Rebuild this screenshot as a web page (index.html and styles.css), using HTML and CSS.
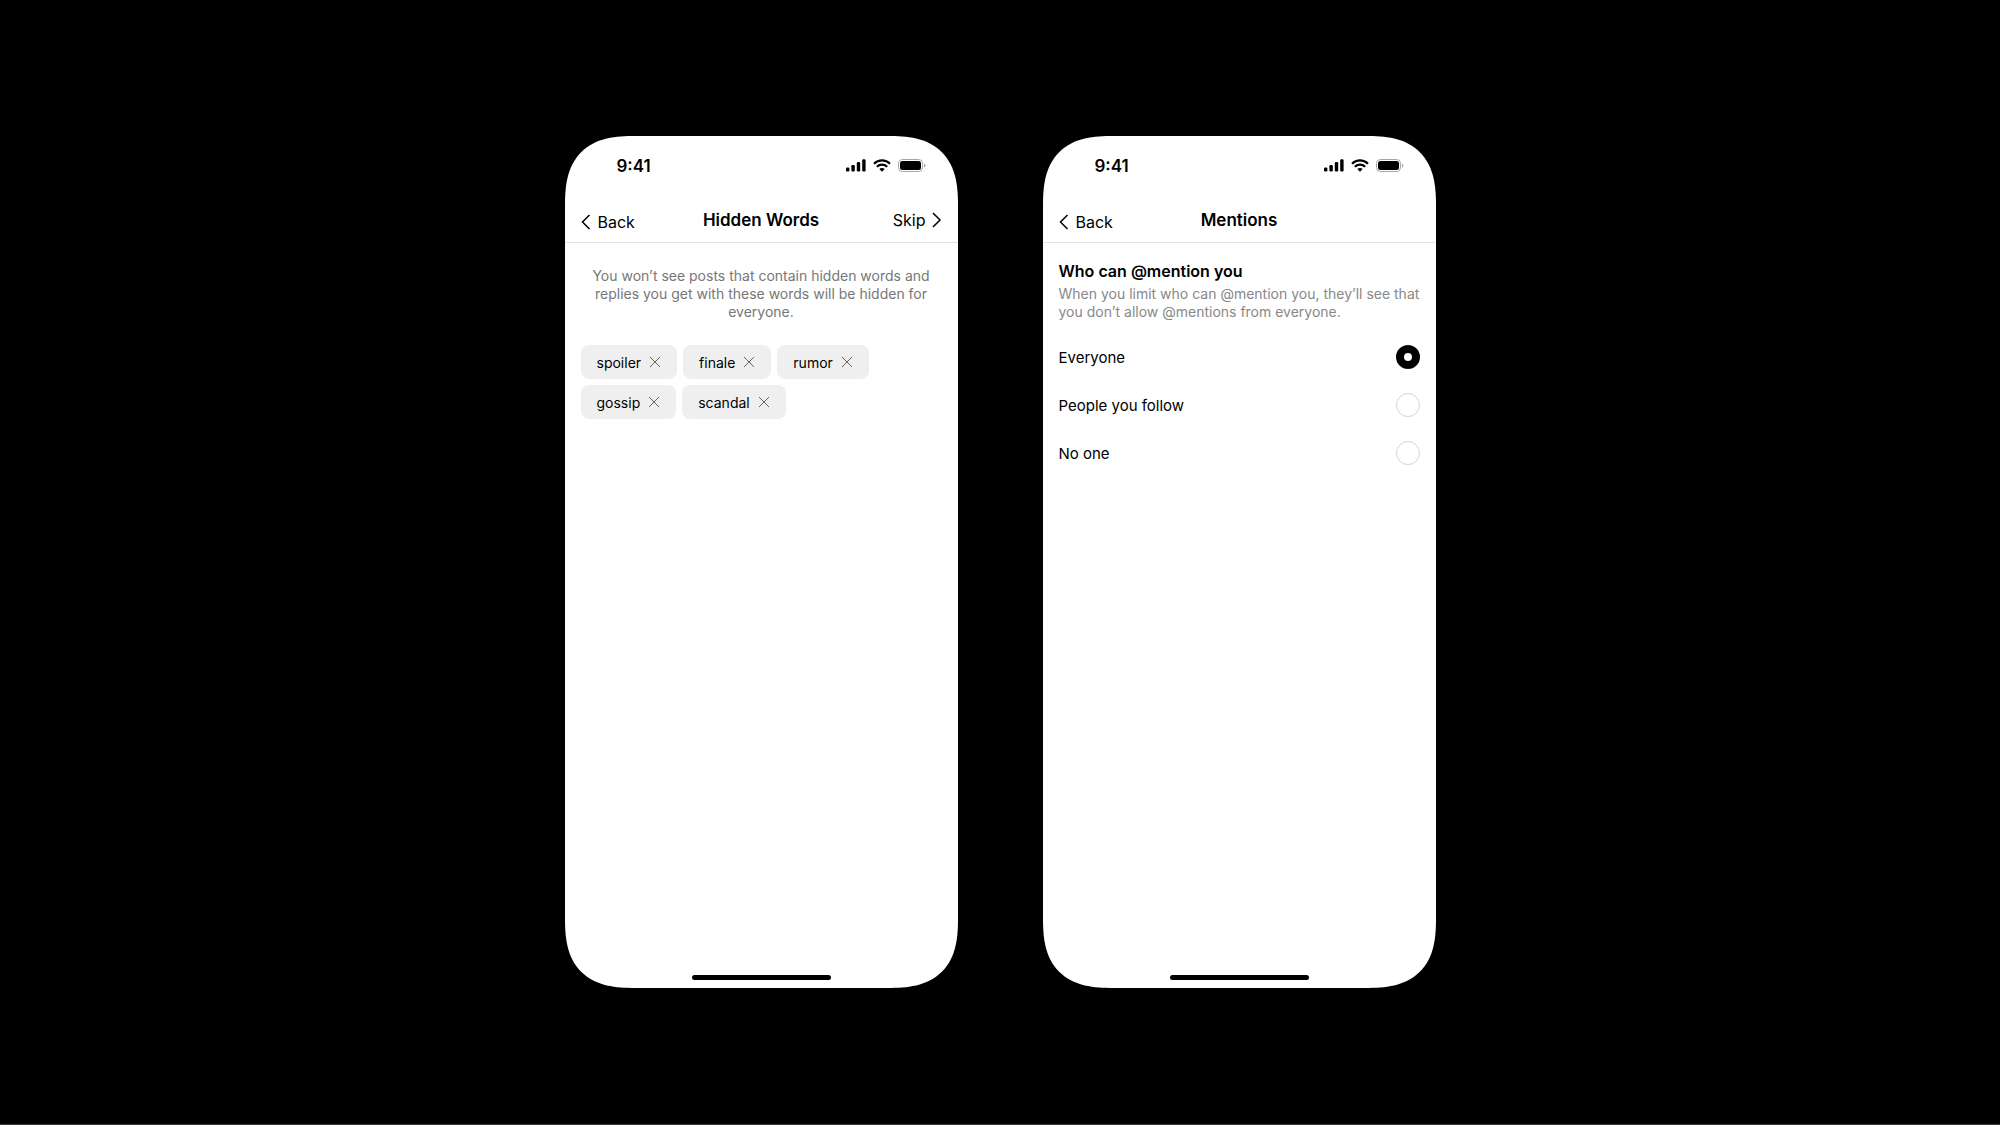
FILE: index.html
```html
<!DOCTYPE html>
<html lang="en">
<head>
    <meta charset="UTF-8" />
    <meta name="viewport" content="width=device-width, initial-scale=1.0" />
    <title>Privacy settings</title>
    <link rel="stylesheet" href="styles.css">
</head>
<body>

    <!-- Shared icons -->
    <svg class="sprite" aria-hidden="true">
        <symbol id="icon-signal" viewBox="0 0 20 13">
            <rect x="0" y="8.6" width="3.4" height="3.8" rx="1.2" />
            <rect x="5.4" y="6" width="3.4" height="6.4" rx="1.2" />
            <rect x="10.8" y="3" width="3.4" height="9.4" rx="1.2" />
            <rect x="16.2" y="0.2" width="3.4" height="12.2" rx="1.2" />
        </symbol>
        <symbol id="icon-wifi" viewBox="0 0 18 13">
            <path d="M1 4.7C5.5 0.3 12.5 0.3 17 4.7M3.8 7.8C6.8 4.9 11.2 4.9 14.2 7.8" fill="none" stroke="currentColor" stroke-width="2.2" />
            <path d="M9 12.7L6.3 10C7.8 8.7 10.2 8.7 11.7 10Z" />
        </symbol>
        <symbol id="icon-battery" viewBox="0 0 28 13">
            <rect x="0.5" y="0.5" width="24" height="12" rx="3.8" fill="none" stroke="#a6a6a6" />
            <path d="M26 4.5v4c0.9-0.3 1.4-1.1 1.4-2s-0.5-1.7-1.4-2z" fill="#a6a6a6" />
            <rect x="2" y="2" width="21" height="9" rx="2.5" />
        </symbol>
        <symbol id="icon-left" viewBox="0 0 10 16">
            <path d="M8.5 1L1.5 8l7 7" fill="none" stroke="currentColor" stroke-width="1.5" />
        </symbol>
        <symbol id="icon-right" viewBox="0 0 10 16">
            <path d="M1 1l7 7-7 7" fill="none" stroke="currentColor" stroke-width="1.5" />
        </symbol>
        <symbol id="icon-close" viewBox="0 0 12 12">
            <path d="M1 1l10 10M11 1L1 11" fill="none" stroke="currentColor" stroke-width="1" />
        </symbol>
    </svg>

    <main class="stage">

        <section class="phone">
            <div class="status-bar">
                <span class="time">9:41</span>
                <div class="status-icons">
                    <svg class="signal"><use href="#icon-signal" /></svg>
                    <svg class="wifi"><use href="#icon-wifi" /></svg>
                    <svg class="battery"><use href="#icon-battery" /></svg>
                </div>
            </div>
            <header class="nav">
                <button type="button" class="nav-btn back"><svg class="chevron"><use href="#icon-left" /></svg>Back</button>
                <h1>Hidden Words</h1>
                <button type="button" class="nav-btn skip">Skip<svg class="chevron"><use href="#icon-right" /></svg></button>
            </header>
            <div class="content">
                <p class="intro">You won’t see posts that contain hidden words and replies you get with these words will be hidden for everyone.</p>
                <div class="chips">
                    <button type="button" class="chip">spoiler<svg><use href="#icon-close" /></svg></button>
                    <button type="button" class="chip">finale<svg><use href="#icon-close" /></svg></button>
                    <button type="button" class="chip">rumor<svg><use href="#icon-close" /></svg></button>
                    <button type="button" class="chip">gossip<svg><use href="#icon-close" /></svg></button>
                    <button type="button" class="chip">scandal<svg><use href="#icon-close" /></svg></button>
                </div>
            </div>
            <div class="home-bar"></div>
        </section>

        <section class="phone">
            <div class="status-bar">
                <span class="time">9:41</span>
                <div class="status-icons">
                    <svg class="signal"><use href="#icon-signal" /></svg>
                    <svg class="wifi"><use href="#icon-wifi" /></svg>
                    <svg class="battery"><use href="#icon-battery" /></svg>
                </div>
            </div>
            <header class="nav">
                <button type="button" class="nav-btn back"><svg class="chevron"><use href="#icon-left" /></svg>Back</button>
                <h1>Mentions</h1>
            </header>
            <form class="content">
                <h2>Who can @mention you</h2>
                <p class="help">When you limit who can @mention you, they’ll see that you don’t allow @mentions from everyone.</p>
                <div class="options">
                    <label class="option" for="everyone">Everyone <input type="radio" name="mention" id="everyone" checked /></label>
                    <label class="option" for="follow">People you follow <input type="radio" name="mention" id="follow" /></label>
                    <label class="option" for="no-one">No one <input type="radio" name="mention" id="no-one" /></label>
                </div>
            </form>
            <div class="home-bar"></div>
        </section>

    </main>

</body>
</html>
```

FILE: styles.css
```css
* {
    box-sizing: border-box;
}

body {
    margin: 0;
    background: #000;
    color: #000;
    font-family: Inter, "Liberation Sans", sans-serif;
}

button {
    border: none;
    background: none;
    color: inherit;
    font-family: inherit;
    cursor: pointer;
}

h1, h2, p {
    margin: 0;
}

svg {
    display: block;
    fill: currentColor;
}

.sprite {
    display: none;
}

.stage {
    min-height: 100vh;
    display: flex;
    flex-wrap: wrap;
    align-items: center;
    justify-content: center;
    gap: 85px;
    border-bottom: 1px solid #3c383c;
}

.phone {
    width: 393px;
    min-height: 852px;
    display: flex;
    flex-direction: column;
    background: #fff;
    border-radius: 56px;
    overflow: hidden;
}

/* Smoother corners where the browser has them */
@supports (corner-shape: superellipse(1.4)) {
    .phone {
        border-radius: 70px;
        corner-shape: superellipse(1.4);
    }
}

/* Status bar */
.status-bar {
    height: 59px;
    padding: 0 32px 0 52px;
    display: flex;
    align-items: center;
    justify-content: space-between;
}

.time {
    font-size: 17px;
    font-weight: 600;
}

.status-icons {
    display: flex;
    gap: 7px;
}

.signal {
    width: 20px;
    height: 13px;
}

.wifi {
    width: 18px;
    height: 13px;
}

.battery {
    width: 28px;
    height: 13px;
}

/* Navigation */
.nav {
    height: 48px;
    padding: 4px 16px 0;
    display: grid;
    grid-template-columns: 1fr auto 1fr;
    align-items: center;
    border-bottom: 1px solid #e2e2e2;
}

.nav h1 {
    grid-column: 2;
    font-size: 17px;
    font-weight: 600;
    line-height: 20px;
    padding-bottom: 2px;
}

.nav-btn {
    padding: 0;
    display: flex;
    align-items: center;
    font-size: 16px;
    line-height: 20px;
}

.back {
    justify-self: start;
    gap: 7px;
    padding-top: 2px;
}

.skip {
    justify-self: end;
    gap: 6px;
    padding-bottom: 2px;
}

.chevron {
    width: 10px;
    height: 16px;
}

/* Content */
.content {
    flex: 1;
    padding: 16px;
}

.intro,
.help {
    font-size: 14px;
    line-height: 18px;
    color: #777;
}

.intro {
    padding: 8px 8px 0;
    text-align: center;
}

.chips {
    margin-top: 24px;
    display: flex;
    flex-wrap: wrap;
    gap: 6px;
}

.chip {
    height: 34px;
    padding: 0 16px;
    display: flex;
    align-items: center;
    gap: 8px;
    background: #efefef;
    border-radius: 8px;
    font-size: 14px;
}

.chip svg {
    width: 12px;
    height: 12px;
    color: #666;
}

.content h2 {
    font-size: 16px;
    font-weight: 600;
    line-height: 24px;
}

.help {
    margin-top: 2px;
    color: #888;
}

.options {
    margin-top: 12px;
}

.option {
    height: 48px;
    display: flex;
    align-items: center;
    justify-content: space-between;
    font-size: 15px;
    cursor: pointer;
}

.option input {
    appearance: none;
    width: 24px;
    height: 24px;
    margin: 0;
    border: 1px solid #d4d4d4;
    border-radius: 50%;
    background: #fff;
    cursor: pointer;
}

.option input:checked {
    border: 8px solid #000;
}

.home-bar {
    width: 139px;
    height: 5px;
    margin: 0 auto 8px;
    border-radius: 3px;
    background: #000;
}
```
